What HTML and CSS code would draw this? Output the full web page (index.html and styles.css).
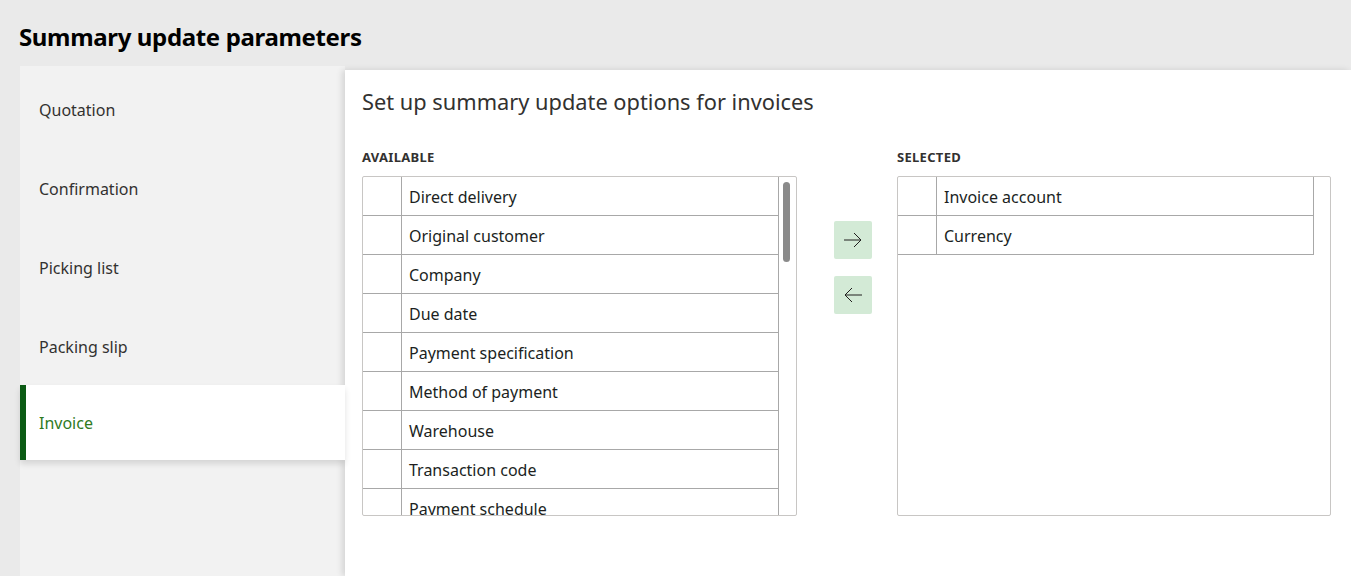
FILE: index.html
```html
<!DOCTYPE html>
<html>
<head>
<meta charset="utf-8">
<link rel="stylesheet" href="styles.css">
</head>
<body>
<div class="page">
  <h1 class="title">Summary update parameters</h1>
  <div class="body">
    <nav class="nav">
      <div class="nav-item">Quotation</div>
      <div class="nav-item">Confirmation</div>
      <div class="nav-item">Picking list</div>
      <div class="nav-item">Packing slip</div>
      <div class="nav-item active">Invoice</div>
    </nav>
    <main class="panel">
      <h2 class="heading">Set up summary update options for invoices</h2>
      <div class="lists">
        <section class="col">
          <div class="label">AVAILABLE</div>
          <div class="listbox">
            <div class="grid">
              <div class="row"><span class="sel"></span><span class="cell">Direct delivery</span></div>
              <div class="row"><span class="sel"></span><span class="cell">Original customer</span></div>
              <div class="row"><span class="sel"></span><span class="cell">Company</span></div>
              <div class="row"><span class="sel"></span><span class="cell">Due date</span></div>
              <div class="row"><span class="sel"></span><span class="cell">Payment specification</span></div>
              <div class="row"><span class="sel"></span><span class="cell">Method of payment</span></div>
              <div class="row"><span class="sel"></span><span class="cell">Warehouse</span></div>
              <div class="row"><span class="sel"></span><span class="cell">Transaction code</span></div>
              <div class="row"><span class="sel"></span><span class="cell">Payment schedule</span></div>
            </div>
            <div class="scroll"><div class="thumb"></div></div>
          </div>
        </section>
        <div class="buttons">
          <button class="btn" aria-label="Add">
            <svg width="20" height="20" viewBox="0 0 20 20"><path d="M1 10H18M11 3L18 10L11 17" fill="none" stroke="#201f1e" stroke-width="1"/></svg>
          </button>
          <button class="btn" aria-label="Remove">
            <svg width="20" height="20" viewBox="0 0 20 20"><path d="M19 10H2M9 3L2 10L9 17" fill="none" stroke="#201f1e" stroke-width="1"/></svg>
          </button>
        </div>
        <section class="col">
          <div class="label">SELECTED</div>
          <div class="listbox">
            <div class="grid">
              <div class="row"><span class="sel"></span><span class="cell">Invoice account</span></div>
              <div class="row"><span class="sel"></span><span class="cell">Currency</span></div>
            </div>
            <div class="scroll"></div>
          </div>
        </section>
      </div>
    </main>
  </div>
</div>
</body>
</html>
```
FILE: styles.css
```css
* { box-sizing: border-box; }
html, body { margin: 0; padding: 0; }
body {
  background: #eaeaea;
  font-family: "Noto Sans", "Open Sans", sans-serif;
  color: #201f1e;
  width: 1351px;
  height: 576px;
  overflow: hidden;
}
.page { display: flex; flex-direction: column; height: 576px; }
.title {
  margin: 0;
  padding: 20px 0 0 19px;
  height: 66px;
  font-size: 24px;
  font-weight: 700;
  color: #000;
  letter-spacing: -0.35px;
}
.body { display: flex; flex: 1; padding-left: 20px; }
.nav {
  width: 325px;
  background: #f2f2f2;
  padding-top: 3px;
  display: flex;
  flex-direction: column;
  gap: 4px;
}
.nav-item {
  height: 75px;
  display: flex;
  align-items: center;
  padding: 7px 0 0 19px;
  font-size: 16px;
  color: #323130;
}
.nav-item.active {
  background: #fff;
  border-left: 6px solid #0b5a14;
  padding: 0 0 0 13px;
  color: #2f7a1e;
  box-shadow: 0 4px 6px rgba(0,0,0,0.12);
  position: relative;
  z-index: 2;
}
.panel {
  flex: 1;
  background: #fff;
  margin-top: 4px;
  padding: 17px 0 0 17px;
  box-shadow: -3px 0 6px rgba(0,0,0,0.12);
  position: relative;
  z-index: 1;
}
.heading {
  margin: 0;
  font-size: 21.8px;
  font-weight: 400;
  color: #323130;
  height: 61px;
}
.lists { display: flex; }
.col { display: flex; flex-direction: column; }
.label {
  font-size: 13px;
  font-weight: 700;
  color: #323130;
  height: 28px;
  line-height: 16px;
  padding-top: 1px;
  letter-spacing: 0.3px;
}
.listbox {
  width: 435px;
  height: 340px;
  border: 1px solid #c8c6c4;
  border-radius: 2px;
  display: flex;
  overflow: hidden;
}
.col:last-child .listbox { width: 434px; }
.grid { width: 416px; display: flex; flex-direction: column; }
.row {
  display: flex;
  height: 39px;
  flex-shrink: 0;
  border-bottom: 1px solid #a8a8a8;
  border-right: 1px solid #a8a8a8;
}
.sel { width: 39px; border-right: 1px solid #a8a8a8; }
.cell {
  flex: 1;
  padding: 9px 0 0 7px;
  font-size: 16px;
  white-space: nowrap;
}
.scroll { flex: 1; padding: 5px 0 0 4px; }
.thumb {
  width: 7px;
  height: 80px;
  background: #8a8a8a;
  border-radius: 4px;
}
.buttons {
  width: 100px;
  display: flex;
  flex-direction: column;
  align-items: flex-start;
  padding: 73px 0 0 37px;
  gap: 17px;
}
.btn {
  width: 38px;
  height: 38px;
  border: none;
  border-radius: 2px;
  background: #d3ead6;
  display: flex;
  align-items: center;
  justify-content: center;
  padding: 0;
}
```
